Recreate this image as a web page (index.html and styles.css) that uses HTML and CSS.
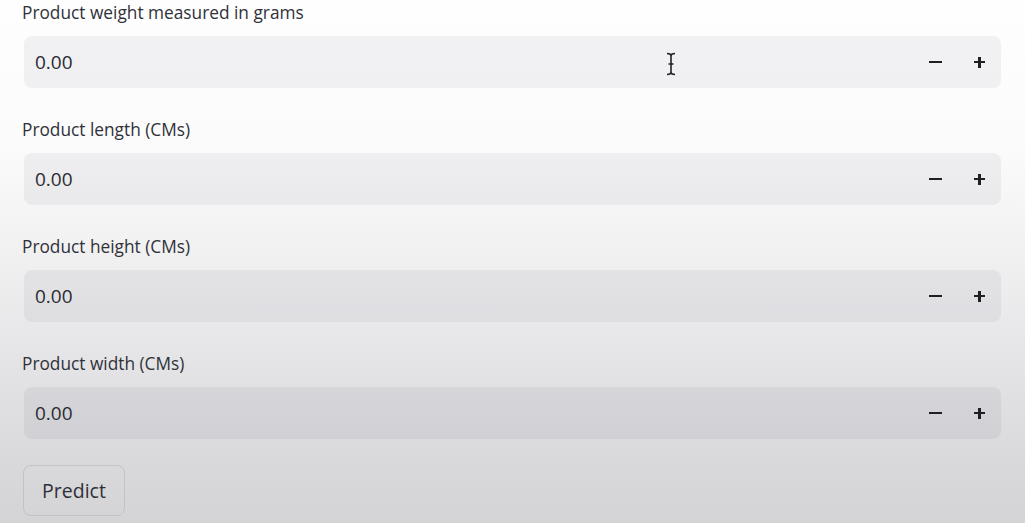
FILE: index.html
```html
<!DOCTYPE html>
<html>
<head>
<meta charset="utf-8">
<link rel="stylesheet" href="styles.css">
</head>
<body>
<main class="page">
  <div class="field">
    <label class="label">Product weight measured in grams</label>
    <div class="input">
      <span class="value">0.00</span>
      <span class="steps"><span class="step minus"></span><span class="step plus"></span></span>
      <svg class="cursor" width="12" height="26" viewBox="0 0 12 26"><path d="M2 2.5 Q6 2.5 6 5 Q6 2.5 10 2.5 M6 5 V21 M3.5 13 H8.5 M2 23.5 Q6 23.5 6 21 Q6 23.5 10 23.5" fill="none" stroke="#222" stroke-width="1.6"/></svg>
    </div>
  </div>
  <div class="field">
    <label class="label">Product length (CMs)</label>
    <div class="input">
      <span class="value">0.00</span>
      <span class="steps"><span class="step minus"></span><span class="step plus"></span></span>
    </div>
  </div>
  <div class="field">
    <label class="label">Product height (CMs)</label>
    <div class="input">
      <span class="value">0.00</span>
      <span class="steps"><span class="step minus"></span><span class="step plus"></span></span>
    </div>
  </div>
  <div class="field">
    <label class="label">Product width (CMs)</label>
    <div class="input">
      <span class="value">0.00</span>
      <span class="steps"><span class="step minus"></span><span class="step plus"></span></span>
    </div>
  </div>
  <button class="btn">Predict</button>
</main>
</body>
</html>
```
FILE: styles.css
```css
html, body {
  margin: 0;
  height: 100%;
}
body {
  background: linear-gradient(180deg, #fefefe 0%, #fbfbfc 28%, #f1f1f2 48%, #e5e5e7 68%, #d9d9db 88%, #d4d4d6 100%);
  font-family: "Open Sans", "Noto Sans", sans-serif;
  color: #2f3038;
  overflow: hidden;
}
.page {
  display: flex;
  flex-direction: column;
  padding: 0 24px 0 22px;
}
.field {
  display: flex;
  flex-direction: column;
  gap: 11px;
  margin-bottom: 29px;
}
.label {
  font-size: 17.3px;
  line-height: 25px;
  color: #303139;
}
.input {
  position: relative;
  margin-left: 2px;
  height: 52px;
  border-radius: 8px;
  background: rgba(40, 45, 75, 0.055);
  display: flex;
  align-items: center;
  padding: 0 15px 0 11px;
}
.value {
  flex: 1;
  font-size: 19px;
  color: #2a2b31;
}
.steps {
  display: flex;
  gap: 31px;
  align-items: center;
}
.step {
  position: relative;
  width: 13px;
  height: 13px;
}
.step::before, .plus::after {
  content: "";
  position: absolute;
  background: #1f1f24;
}
.step::before {
  left: 0;
  top: 5.5px;
  width: 13px;
  height: 2.4px;
}
.plus::before {
  left: 1px;
  width: 11px;
}
.plus::after {
  left: 5.3px;
  top: 1px;
  width: 2.4px;
  height: 11px;
}
.cursor {
  position: absolute;
  left: 641px;
  top: 15px;
}
.btn {
  align-self: flex-start;
  margin-top: -3px;
  margin-left: 1px;
  width: 102px;
  height: 51px;
  border: 1px solid #c3c3c6;
  border-radius: 8px;
  background: transparent;
  font-family: "Open Sans", "Noto Sans", sans-serif;
  font-size: 19.5px;
  color: #2f3038;
  padding: 0;
}
```
